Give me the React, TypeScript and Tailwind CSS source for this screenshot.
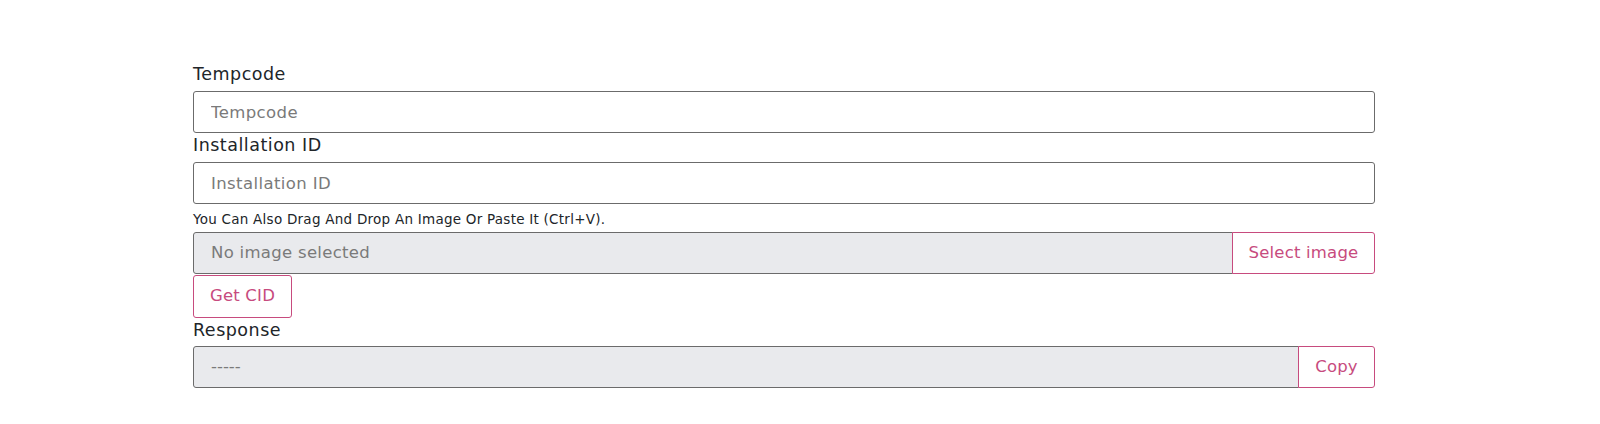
import React, { useState } from 'react';

const font = { fontFamily: '"DejaVu Sans", "Noto Sans", sans-serif' };

const App: React.FC = () => {
    const [tempcode, setTempcode] = useState('');
    const [installationId, setInstallationId] = useState('');

    return (
        <div className="min-h-screen bg-white text-[#212529]" style={font}>
            <div className="ml-[193px] w-[1182px] pt-[62px]">
                <label className="block text-[17.5px] tracking-[0.5px] leading-[24px] mb-[5px]">Tempcode</label>
                <input
                    type="text"
                    value={tempcode}
                    onChange={(e) => setTempcode(e.target.value)}
                    placeholder="Tempcode"
                    className="block w-full h-[42px] px-[17px] text-[16.5px] tracking-[0.4px] border border-[#6b6b6b] rounded-[3px] placeholder-[#7a7a7a] focus:outline-none"
                />

                <label className="block text-[17.5px] tracking-[0.5px] leading-[24px] mb-[5px]">Installation ID</label>
                <input
                    type="text"
                    value={installationId}
                    onChange={(e) => setInstallationId(e.target.value)}
                    placeholder="Installation ID"
                    className="block w-full h-[42px] px-[17px] text-[16.5px] tracking-[0.4px] border border-[#6b6b6b] rounded-[3px] placeholder-[#7a7a7a] focus:outline-none"
                />

                <p className="text-[13.5px] tracking-[0.25px] leading-[20px] pt-[5px] pb-[3px]">
                    You Can Also Drag And Drop An Image Or Paste It (Ctrl+V).
                </p>

                <div className="flex h-[42px]">
                    <div className="flex-1 flex items-center px-[17px] text-[16.5px] tracking-[0.3px] text-[#7a7a7a] bg-[#e9eaed] border border-[#6b6b6b] rounded-l-[3px]">
                        No image selected
                    </div>
                    <button className="w-[143px] text-[16.5px] tracking-[0.2px] text-[#c74b7e] border border-[#c74b7e] -ml-px rounded-r-[3px] bg-white">
                        Select image
                    </button>
                </div>

                <button className="mt-px h-[43px] w-[99px] text-[16.5px] tracking-[0.2px] text-[#c74b7e] border border-[#c74b7e] rounded-[3px] bg-white">
                    Get CID
                </button>

                <label className="block text-[17.5px] tracking-[0.5px] leading-[24px] mb-[4px]">Response</label>
                <div className="flex h-[42px]">
                    <div className="flex-1 flex items-center px-[17px] text-[16.5px] text-[#7a7a7a] bg-[#e9eaed] border border-[#6b6b6b] rounded-l-[3px]">
                        -----
                    </div>
                    <button className="w-[77px] text-[16.5px] tracking-[0.2px] text-[#c74b7e] border border-[#c74b7e] -ml-px rounded-r-[3px] bg-white">
                        Copy
                    </button>
                </div>
            </div>
        </div>
    );
};

export default App;
